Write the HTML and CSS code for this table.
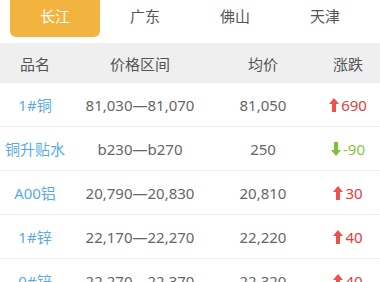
FILE: index.html
```html
<!DOCTYPE html>
<html lang="zh">
<head>
<meta charset="utf-8">
<link rel="stylesheet" href="styles.css">
</head>
<body>
<div class="tabs">
  <div class="tab active">长江</div>
  <div class="tab">广东</div>
  <div class="tab">佛山</div>
  <div class="tab">天津</div>
</div>
<div class="table">
  <div class="row head">
    <div>品名</div><div>价格区间</div><div>均价</div><div>涨跌</div>
  </div>
  <div class="row">
    <div class="name">1#铜</div><div>81,030—81,070</div><div>81,050</div>
    <div class="chg up"><svg class="arr" viewBox="0 0 10 14"><path d="M5 0 L10 6 L7 6 L7 14 L3 14 L3 6 L0 6 Z"/></svg>690</div>
  </div>
  <div class="row">
    <div class="name">铜升贴水</div><div>b230—b270</div><div>250</div>
    <div class="chg down"><svg class="arr" viewBox="0 0 10 14"><path d="M5 14 L10 8 L7 8 L7 0 L3 0 L3 8 L0 8 Z"/></svg>-90</div>
  </div>
  <div class="row">
    <div class="name">A00铝</div><div>20,790—20,830</div><div>20,810</div>
    <div class="chg up"><svg class="arr" viewBox="0 0 10 14"><path d="M5 0 L10 6 L7 6 L7 14 L3 14 L3 6 L0 6 Z"/></svg>30</div>
  </div>
  <div class="row">
    <div class="name">1#锌</div><div>22,170—22,270</div><div>22,220</div>
    <div class="chg up"><svg class="arr" viewBox="0 0 10 14"><path d="M5 0 L10 6 L7 6 L7 14 L3 14 L3 6 L0 6 Z"/></svg>40</div>
  </div>
  <div class="row">
    <div class="name">0#锌</div><div>22,270—22,370</div><div>22,320</div>
    <div class="chg up"><svg class="arr" viewBox="0 0 10 14"><path d="M5 0 L10 6 L7 6 L7 14 L3 14 L3 6 L0 6 Z"/></svg>40</div>
  </div>
</div>
</body>
</html>
```
FILE: styles.css
```css
* { box-sizing: border-box; }
html, body {
  margin: 0;
  padding: 0;
  background: #fff;
  width: 380px;
  height: 282px;
  overflow: hidden;
}
body {
  font-family: "Noto Sans", "Noto Sans CJK SC", sans-serif;
  font-size: 15px;
  color: #666;
}
.tabs {
  display: flex;
  padding: 0 10px;
  height: 37px;
}
.tab {
  flex: 0 0 90px;
  text-align: center;
  line-height: 32px;
  color: #555;
}
.tab.active {
  background: #f2b43f;
  color: #fff;
  border-radius: 0 0 6px 6px;
}
.table {
  margin-top: 6px;
}
.row {
  display: grid;
  grid-template-columns: 70px 140px 106px 64px;
  height: 44px;
  align-items: center;
  text-align: center;
  border-bottom: 1px solid #f0f0f0;
  white-space: nowrap;
}
.row.head {
  height: 40px;
  background: #efefef;
  border-bottom: none;
  color: #555;
}
.name {
  color: #5aaae6;
}
.chg {
  display: flex;
  justify-content: center;
  align-items: center;
  gap: 2px;
}
.arr {
  width: 10px;
  height: 14px;
}
.up { color: #e33c3c; }
.up .arr { fill: #f0504c; }
.down { color: #8cc441; }
.down .arr { fill: #7cbf3a; }
```
